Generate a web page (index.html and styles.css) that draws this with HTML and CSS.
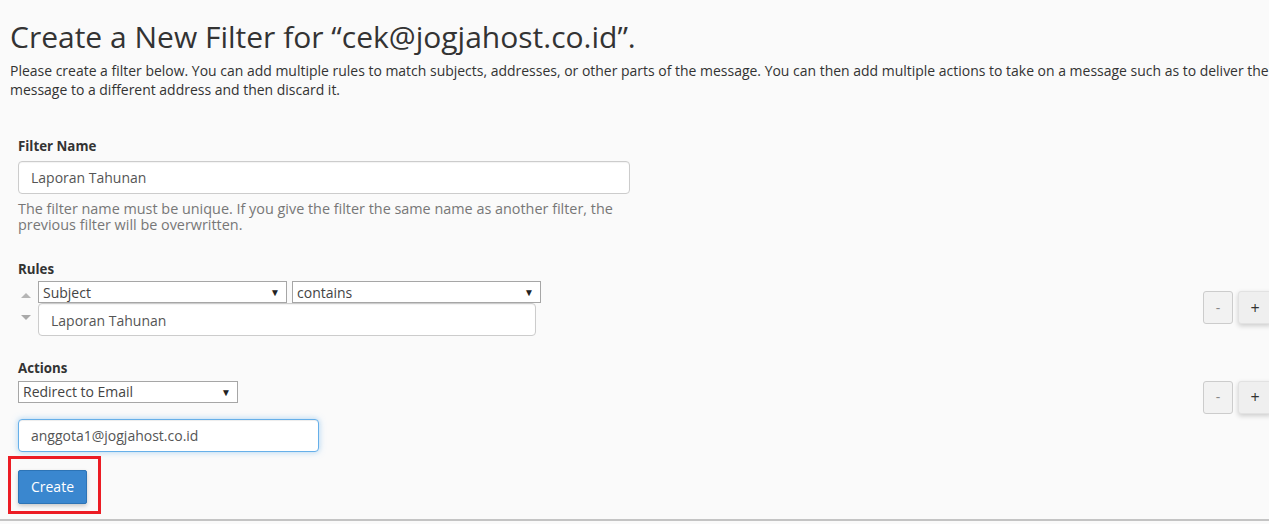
FILE: index.html
```html
<!DOCTYPE html>
<html lang="en">
<head>
<meta charset="utf-8">
<title>Create a New Filter</title>
<link rel="stylesheet" href="styles.css">
</head>
<body>
<div class="page">
  <h1 class="title">Create a New Filter for “cek@jogjahost.co.id”.</h1>
  <p class="intro">Please create a filter below. You can add multiple rules to match subjects, addresses, or other parts of the message. You can then add multiple actions to take on a message such as to deliver the message to a different address and then discard it.</p>

  <div class="form">
    <div class="label label-first">Filter Name</div>
    <div class="input input-name">Laporan Tahunan</div>
    <div class="help">The filter name must be unique. If you give the filter the same name as another filter, the previous filter will be overwritten.</div>

    <div class="label label-rules">Rules</div>
    <div class="row row-rules">
      <div class="order">
        <span class="tri tri-up"></span>
        <span class="tri tri-down"></span>
      </div>
      <div class="rule-body">
        <div class="selects">
          <div class="select select-rule"><span>Subject</span><span class="caret">▼</span></div>
          <div class="select select-rule"><span>contains</span><span class="caret">▼</span></div>
        </div>
        <div class="input input-rule">Laporan Tahunan</div>
      </div>
      <div class="btns btns-rules">
        <div class="btn-sq btn-minus">-</div>
        <div class="btn-sq btn-plus">+</div>
      </div>
    </div>

    <div class="label label-actions">Actions</div>
    <div class="row row-actions">
      <div class="select select-action"><span>Redirect to Email</span><span class="caret">▼</span></div>
      <div class="btns">
        <div class="btn-sq btn-minus">-</div>
        <div class="btn-sq btn-plus">+</div>
      </div>
    </div>
    <div class="input input-email">anggota1@jogjahost.co.id</div>

    <div class="submit">
      <div class="btn-create">Create</div>
      <div class="highlight"></div>
    </div>
  </div>
</div>
<div class="bottom-line"></div>
</body>
</html>
```

FILE: styles.css
```css
html, body {
  margin: 0;
  padding: 0;
}
body {
  background: #fafafa;
  font-family: "Open Sans", "Noto Sans", sans-serif;
  color: #333;
  overflow: hidden;
  width: 1269px;
  height: 524px;
}
.page {
  padding-left: 10px;
}
.title {
  font-size: 30px;
  font-weight: 400;
  line-height: 33px;
  margin: 20px 0 9px 0;
  color: #333;
  white-space: nowrap;
}
.intro {
  font-size: 13.97px;
  line-height: 18.5px;
  margin: 0;
  color: #333;
  width: 1290px;
}
.form {
  padding-left: 8px;
  padding-top: 38px;
}
.label {
  font-size: 13.3px;
  font-weight: 700;
  line-height: 18.5px;
  color: #333;
}
.input {
  box-sizing: border-box;
  background: #fff;
  border: 1px solid #ccc;
  border-radius: 4px;
  height: 33px;
  padding: 0 12px;
  font-size: 14px;
  line-height: 31px;
  color: #555;
  box-shadow: inset 0 1px 1px rgba(0,0,0,.05);
}
.input-name {
  margin-top: 5px;
  width: 612px;
}
.help {
  margin-top: 7px;
  width: 612px;
  font-size: 14.4px;
  line-height: 16px;
  color: #777;
}
.label-rules {
  margin-top: 27px;
}
.row {
  display: flex;
  margin-right: -3px;
}
.row-rules {
  margin-top: 3px;
  align-items: flex-start;
}
.order {
  width: 20px;
  display: flex;
  flex-direction: column;
  align-items: center;
  padding-top: 12px;
  gap: 17px;
}
.tri {
  display: block;
  width: 0;
  height: 0;
  border-left: 5px solid transparent;
  border-right: 5px solid transparent;
  margin-left: -4px;
}
.tri-up {
  border-bottom: 5px solid #b5b5b5;
}
.tri-down {
  border-top: 5px solid #a9a9a9;
}
.rule-body {
  display: flex;
  flex-direction: column;
}
.selects {
  display: flex;
  gap: 5px;
}
.select {
  box-sizing: border-box;
  height: 22px;
  background: #fff;
  border: 1px solid #a6a6a6;
  display: flex;
  justify-content: space-between;
  align-items: center;
  padding: 0 6px 0 4px;
  font-size: 14px;
  color: #444;
}
.select-rule {
  width: 249px;
}
.select-action {
  width: 220px;
}
.caret {
  font-size: 10px;
  color: #222;
  line-height: 1;
}
.input-rule {
  width: 498px;
  line-height: 33px;
}
.btns {
  margin-left: auto;
  display: flex;
  gap: 5px;
}
.btns-rules {
  margin-top: 10px;
}
.btn-sq {
  box-sizing: border-box;
  height: 33px;
  width: 30px;
  border-radius: 3px;
  display: flex;
  align-items: center;
  justify-content: center;
  font-size: 14px;
  line-height: 1;
}
.btn-minus {
  background: #f2f2f2;
  border: 1px solid #ccc;
  color: #888;
}
.btn-plus {
  width: 34px;
  background: #efefef;
  border: 1px solid #e2e2e2;
  color: #333;
  font-size: 16px;
  box-shadow: 0 2px 5px rgba(0,0,0,.18);
}
.label-actions {
  margin-top: 23px;
}
.row-actions {
  margin-top: 3px;
  align-items: flex-start;
  height: 33px;
}
.input-email {
  margin-top: 5px;
  width: 301px;
  border-color: #66afe9;
  box-shadow: inset 0 1px 1px rgba(0,0,0,.075), 0 0 6px rgba(102,175,233,.55);
}
.submit {
  position: relative;
  margin-top: 18px;
  display: flex;
}
.btn-create {
  box-sizing: border-box;
  width: 69px;
  height: 34px;
  background: #3a87cf;
  border: 1px solid #2d74b6;
  border-radius: 2px;
  color: #fff;
  font-size: 14px;
  line-height: 32px;
  text-align: center;
  box-shadow: 0 2px 4px rgba(0,0,0,.2);
}
.highlight {
  position: absolute;
  left: -10px;
  top: -14px;
  width: 93px;
  height: 58px;
  box-sizing: border-box;
  border: 3px solid #ec1c24;
}
.bottom-line {
  position: absolute;
  left: 0;
  top: 519px;
  width: 1269px;
  height: 2px;
  background: #c4c4c4;
}
```
